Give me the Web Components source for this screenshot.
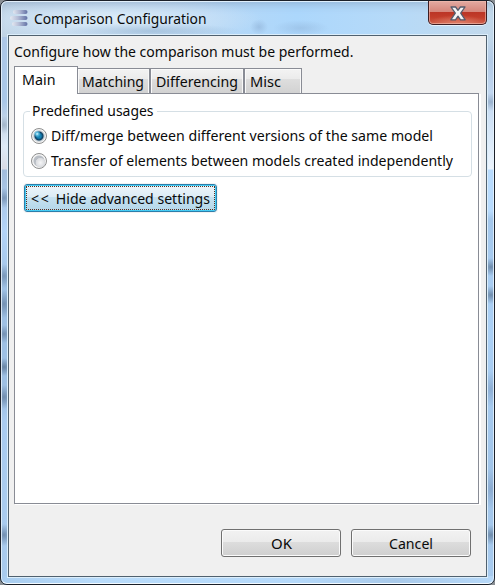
<!DOCTYPE html>
<html lang="en"><head><meta charset="utf-8"><title>Comparison Configuration</title>
<style>
html,body{margin:0;width:495px;height:585px;overflow:hidden;background:#8a8f94}
body{font:15px/20px "Noto Sans","Open Sans",sans-serif;color:#0a0a0a}
.arrows{letter-spacing:1.8px}
</style></head><body>
<glass-window>
  <fit-text slot="title" width="172.5">Comparison Configuration</fit-text>
  <fit-text slot="message" width="339.5">Configure how the comparison must be performed.</fit-text>
  <tab-strip slot="main">
    <tab-item slot="tabs" active style="--w:64px"><fit-text width="33.5">Main</fit-text></tab-item>
    <tab-item slot="tabs" style="--w:73px;--p:4px;margin-left:-1px"><fit-text width="62">Matching</fit-text></tab-item>
    <tab-item slot="tabs" style="--w:94px;--p:5px"><fit-text width="82">Differencing</fit-text></tab-item>
    <tab-item slot="tabs" style="--w:58px;--p:5px"><fit-text width="31">Misc</fit-text></tab-item>
    <group-box>
      <fit-text slot="legend" width="121.5">Predefined usages</fit-text>
      <radio-option checked><fit-text width="382">Diff/merge between different versions of the same model</fit-text></radio-option>
      <radio-option><fit-text width="402">Transfer of elements between models created independently</fit-text></radio-option>
    </group-box>
    <push-button focused><fit-text width="179"><span class="arrows">&lt;&lt; </span>Hide advanced settings</fit-text></push-button>
  </tab-strip>
  <push-button slot="actions"><fit-text width="21">OK</fit-text></push-button>
  <push-button slot="actions"><fit-text width="44">Cancel</fit-text></push-button>
</glass-window>
<script>
const define = (name, html, setup) => customElements.define(name, class extends HTMLElement {
  connectedCallback() {
    if (this.shadowRoot) return;
    this.attachShadow({mode: 'open'}).innerHTML = html;
    if (setup) setup(this);
  }
});

// Condenses its text to a given width.
define('fit-text', `<style>:host{display:inline-block;white-space:pre;flex:none;height:20px}span{display:inline-block;transform-origin:0 0}</style><span><slot></slot></span>`, el => {
  const span = el.shadowRoot.querySelector('span');
  const w = +el.getAttribute('width');
  span.style.transform = `translateY(-1px) scaleX(${w / span.getBoundingClientRect().width})`;
  el.style.width = w + 'px';
});

define('close-button', `<style>
:host{display:flex;box-sizing:border-box;width:59px;height:24px;border:1px solid #3d1d22;border-top:0;border-radius:0 0 5px 5px;
 background:radial-gradient(ellipse 30px 9px at 50% 100%,#e0806a,transparent),linear-gradient(#e3aaa2,#d5857a 11px,#bb3526 11px,#c23c2a 16px,#cc5a45);
 box-shadow:inset 0 0 0 1px #f0bcb0a0,0 1px 0 #e6f2fc}
svg{margin:5px auto 0}
</style><svg width="16" height="15" viewBox="0 0 16 15"><path d="M1 1H5.6L8 4.3 10.4 1H15L10.7 7.1 15.2 13.8H10.5L8 10.2 5.5 13.8H.8L5.3 7.1Z" fill="#f4f4f5" stroke="#565b6c" stroke-width="1.3" stroke-linejoin="round"/></svg>`);

define('app-icon', `<style>:host{display:block;width:20px;height:18px}</style>
<svg width="20" height="18" viewBox="0 0 20 18"><defs>
<linearGradient id="g"><stop stop-color="#e4e8f1"/><stop offset=".45" stop-color="#b4bcd6"/><stop offset="1" stop-color="#6171a5"/></linearGradient></defs>
<g fill="url(#g)"><rect x="3" y="1" width="14.5" height="4" rx="2"/><rect x="0" y="7" width="17.5" height="4" rx="2"/><rect x="2" y="13" width="15.5" height="4" rx="2"/></g></svg>`);

define('glass-window', `<style>
:host{position:relative;display:grid;grid-template-rows:33px 543px;box-sizing:border-box;width:495px;height:585px;padding:0 7px 0 7px;
 border:1px solid #1b2029;border-top-width:1px;border-radius:7px;overflow:hidden;
 background:
 radial-gradient(ellipse 9px 8px at 258px 26px,#809fc566,transparent),
 radial-gradient(ellipse 28px 8px at 300px 27px,#86a5c959,transparent),
 radial-gradient(ellipse 90px 8px at 150px 30px,#759abd66,transparent),
 radial-gradient(ellipse 150px 25px at 110px 18px,#e0effae0,#d3e6f790 60%,transparent),
 linear-gradient(90deg,#bfd3e5,#b8d8f5 40%,#acd7fc 60%,#b6daf8 80%,#c3d9eb) 0 0/100% 36px no-repeat,
 linear-gradient(90deg,#a9cdef,#b9dcfb 20%,#b5d9fa 60%,#a9caea 80%,#b7d9f9) 0 575px/100% 10px no-repeat,
 radial-gradient(ellipse 9px 9px at 3px 124px,#8ea4b8a0,transparent),
 radial-gradient(ellipse 12px 10px at 3px 197px,#6783a3b0,transparent),
 radial-gradient(ellipse 12px 12px at 3px 275px,#6783a3b0,transparent),
 radial-gradient(ellipse 12px 14px at 3px 303px,#6783a3c0,transparent),
 radial-gradient(ellipse 12px 9px at 3px 333px,#6783a3c0,transparent),
 radial-gradient(ellipse 12px 9px at 3px 366px,#5d7896d0,transparent),
 radial-gradient(ellipse 12px 12px at 3px 396px,#6783a3d0,transparent),
 radial-gradient(ellipse 12px 11px at 3px 534px,#6783a3d0,transparent),
 linear-gradient(#aec8e8 36px,#aac8e8 100px,#c7d8e9 124px,#dfecf8 145px,#d9dce5 168px,#a3bedc 169px,#b4d5f8 230px,#9fc1e4 290px,#9fc1e4 400px,#abcdf1 420px,#a9cbed 584px) 0 0/9px 100% no-repeat,
 radial-gradient(ellipse 12px 9px at 490px 101px,#8ba4c1c0,transparent),
 radial-gradient(ellipse 12px 9px at 490px 266px,#5d7896c0,transparent),
 radial-gradient(ellipse 12px 9px at 490px 294px,#5d7896c0,transparent),
 radial-gradient(ellipse 12px 18px at 490px 388px,#86a5cac0,transparent),
 radial-gradient(ellipse 12px 20px at 490px 488px,#819fc4b0,transparent),
 radial-gradient(ellipse 12px 10px at 490px 534px,#5d7896c0,transparent),
 linear-gradient(#c3d9eb 36px,#b4cce8 60px,#c5daf2 100px,#dcebfa 140px,#edf5fd 168px,#b9dcfe 169px,#b9dcfe 210px,#a5c8ec 218px,#acd1f6 330px,#a2c5e9 470px,#a9ccf0 584px)}
:host::after{content:"";position:absolute;inset:0;border:1px solid #e9f4fdd0;border-bottom-color:#f3faff;border-radius:6px;pointer-events:none;box-shadow:inset 0 9px 8px -7px #7891af80}
header{display:flex;align-items:flex-start}
app-icon{margin:8px 7px 0 2px}
.title{margin:8px 0 0 -3px;flex:1}
close-button{position:relative;z-index:1}
main{display:grid;grid-template-rows:29px 440px 1fr;box-sizing:border-box;width:479px;height:542px;margin-top:1px;padding:1px 0 0 5px;border:1px solid #50616f;
 background:#f0f0f0;box-shadow:0 0 0 1px #dceefb}
.message{padding-top:5px}
footer{display:flex;gap:10px;padding:23px 0 0 207px}
</style><header><app-icon></app-icon><div class="title"><slot name="title"></slot></div><close-button></close-button></header>
<main><div class="message"><slot name="message"></slot></div><slot name="main"></slot><footer><slot name="actions"></slot></footer></main>`);

define('tab-item', `<style>
:host{display:block;box-sizing:border-box;width:var(--w);height:25px;border:1px solid #898c95;border-bottom:0;padding:3px 0 0 var(--p,6px);
 background:linear-gradient(#f3f3f3,#ebebeb 10px,#dedede 10px,#d2d2d2);box-shadow:inset 1px 1px #fafafa,inset -1px 0 #f8f8f8}
:host([active]){position:relative;height:28px;padding:3px 0 0 7px;background:#fff;margin-bottom:-1px;z-index:1;box-shadow:none}
</style><slot></slot>`);

define('tab-strip', `<style>
:host{display:grid;grid-template-rows:27px 412px;width:467px}
nav{display:flex;align-items:flex-end}
section{box-sizing:border-box;width:465px;height:411px;border:1px solid #898c95;background:#fff;box-shadow:1px 1px #fff,2px 1px #fff;padding:8px 0 0 8px}
</style><nav><slot name="tabs"></slot></nav><section><slot></slot></section>`);

define('group-box', `<style>
:host{display:block;width:449px;height:75px}
fieldset{box-sizing:border-box;height:75px;margin:0;padding:3px 0 0 7px;border:1px solid #d5dfe5;border-radius:4px;min-width:0}
legend{padding:0 3px 0 2px;margin-left:-1px;height:18px;line-height:18px}
</style><fieldset><legend><slot name="legend"></slot></legend><slot></slot></fieldset>`);

define('radio-option', `<style>
:host{display:flex;align-items:center;height:25px;gap:4px}
i{box-sizing:border-box;width:16px;height:16px;border:1px solid #8e8f8f;border-radius:50%;background:radial-gradient(circle at 60% 62%,#f6f6f7,#d9dbdf 4.5px,transparent 5px),radial-gradient(circle,#b9bec5 5px,#f4f4f4 6px)}
:host([checked]) i{background:radial-gradient(circle at 37% 35%,#dff8ff,#58bbdf 1.5px,transparent 3.5px),radial-gradient(circle,#1684b5 2px,#0b3c60 4px,#b8c3cb 5px,#f4f4f4 6.3px)}
</style><i></i><slot></slot>`);

define('push-button', `<style>
:host{display:flex;align-items:center;justify-content:center;box-sizing:border-box;width:120px;height:28px;padding-top:2px;border:1px solid #707070;border-radius:3px;
 background:linear-gradient(#f2f2f2,#ebebeb 12px,#dddddd 12px,#cfcfcf);box-shadow:inset 0 0 0 1px #fbfbfb}
:host([focused]){position:relative;width:193px;margin-top:7px;margin-left:1px;border-color:#2c7eab;
 background:linear-gradient(#edf5fa,#dcecf5 12px,#c8e2f0 12px,#b3d7e9);box-shadow:inset 0 0 0 1px #45cdf5,0 0 0 1px #f3f3f3}
:host([focused])::after{content:"";position:absolute;inset:1px;border:1px dotted #5a3020}
</style><slot></slot>`);
</script></body></html>
